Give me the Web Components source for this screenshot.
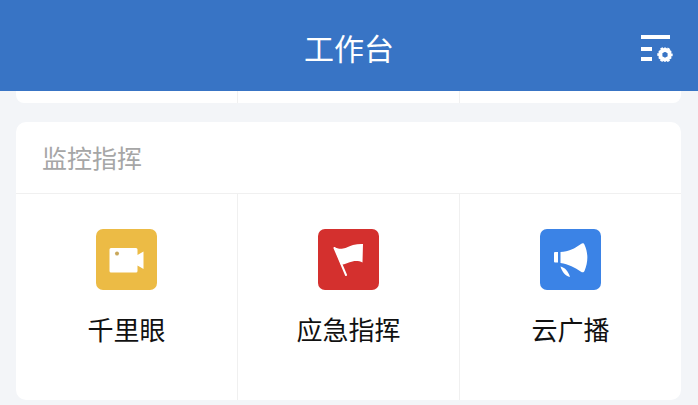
<!DOCTYPE html>
<html lang="zh">
<head>
<meta charset="utf-8">
<title>工作台</title>
<style>
  html, body { margin: 0; height: 405px; overflow: hidden; background: #f3f5f8; }
  body { font-family: "Noto Sans CJK SC", "Liberation Sans", sans-serif; }
</style>
</head>
<body>
<app-header title-text="工作台"></app-header>
<app-page>
  <stub-card></stub-card>
  <grid-card heading="监控指挥">
    <grid-cell label="千里眼" color="#ecbb45" icon="camera"></grid-cell>
    <grid-cell label="应急指挥" color="#d4302e" icon="flag"></grid-cell>
    <grid-cell label="云广播" color="#3b83e6" icon="horn"></grid-cell>
  </grid-card>
</app-page>

<script>
const icons = {
  camera: `<path fill="#fff" d="M15 19h25a1.500 1.500 0 0 1 1.500 1.500V26l6-3.500V40l-6-3.500V42a1.500 1.500 0 0 1-1.500 1.500H15a1.500 1.500 0 0 1-1.500-1.500V20.500A1.500 1.500 0 0 1 15 19z"/><circle cx="21" cy="24.500" r="2" fill="#c9a75a"/>`,
  flag: `<path fill="#fff" d="M16 18c3 1.500 6 2.200 9 1.600 3.500-.7 6-2.600 10-3.600 3.500-.9 7-1.200 10-1l-.5 18.500c-3-1.400-6.500-1.800-10-1-4 .9-7 2.800-11.500 3.300z"/><path fill="none" stroke="#fff" stroke-width="2" stroke-linecap="round" d="M16.500 19l11.500 27"/>`,
  horn: `<path fill="#fff" d="M15 23h3v10.500h-3a1 1 0 0 1-1-1V24a1 1 0 0 1 1-1zM20.500 23c8-.5 14.500-3.500 20.500-8 1.500-1.100 2.800-.8 3.500.7C48.300 24 48.300 33 44.500 42c-.7 1.500-2 1.700-3.500.7-6-4-12.500-7.700-20.500-8.700z"/><path fill="#fff" d="M20.500 37.500c4 .8 7.700 4.500 9.500 10.500-4.500-1-8-5-9.500-10.500z"/>`
};

class AppHeader extends HTMLElement {
  constructor() {
    super();
    this.attachShadow({ mode: 'open' });
    this.shadowRoot.innerHTML = `
      <style>
        :host { display: flex; align-items: center; justify-content: center; position: relative; height: 91px; background: #3874c5; color: #fff; }
        .title { font-size: 30px; line-height: 1; margin-top: 3px; }
        svg { position: absolute; left: 640px; top: 33px; }
      </style>
      <div class="title">${this.getAttribute('title-text')}</div>
      <svg width="34" height="32" viewBox="0 0 34 32">
        <path fill="#fff" d="M1 2h29v4H1zM1 14h11v4H1zM1 24h11v4H1z"/>
        <path fill="none" stroke="#fff" stroke-width="3.800" d="M25 16.500l4.500 2.600v5.200l-4.500 2.600-4.500-2.600v-5.200z"/>
        <circle cx="25" cy="21.700" r="6.800" fill="none" stroke="#fff" stroke-width="1.800" stroke-dasharray="2.800 4.320" stroke-dashoffset="1.400"/>
      </svg>
    `;
  }
}

class AppPage extends HTMLElement {
  constructor() {
    super();
    this.attachShadow({ mode: 'open' });
    this.shadowRoot.innerHTML = `
      <style>
        :host { display: flex; flex-direction: column; gap: 19px; padding: 0 17px 0 16px; }
      </style>
      <slot></slot>
    `;
  }
}

class StubCard extends HTMLElement {
  constructor() {
    super();
    this.attachShadow({ mode: 'open' });
    this.shadowRoot.innerHTML = `
      <style>
        :host { display: grid; grid-template-columns: 221px 222px 1fr; height: 12px; background: #fff; border-radius: 0 0 8px 8px; }
        div + div { border-left: 1px solid #f1f1f1; }
      </style>
      <div></div><div></div><div></div>
    `;
  }
}

class GridCard extends HTMLElement {
  constructor() {
    super();
    this.attachShadow({ mode: 'open' });
    this.shadowRoot.innerHTML = `
      <style>
        :host { display: block; background: #fff; border-radius: 10px; overflow: hidden; }
        .head { height: 72px; box-sizing: border-box; display: flex; align-items: center; padding-left: 26px; padding-bottom: 1px; border-bottom: 1px solid #f0f0f0; font-size: 25px; color: #a6a6a6; }
        .grid { display: grid; grid-template-columns: 221px 222px 1fr; height: 206px; }
      </style>
      <div class="head">${this.getAttribute('heading')}</div>
      <div class="grid"><slot></slot></div>
    `;
  }
}

class GridCell extends HTMLElement {
  constructor() {
    super();
    this.attachShadow({ mode: 'open' });
    const color = this.getAttribute('color');
    this.shadowRoot.innerHTML = `
      <style>
        :host { display: flex; flex-direction: column; align-items: center; padding-top: 35px; }
        :host(:not(:first-child)) { border-left: 1px solid #f0f0f0; }
        .icon { width: 61px; height: 61px; border-radius: 7px; background: ${color}; }
        svg { display: block; }
        .label { margin-top: 21px; font-size: 26px; line-height: 36px; color: #111; }
      </style>
      <div class="icon"><svg width="61" height="61" viewBox="0 0 61 61">${icons[this.getAttribute('icon')]}</svg></div>
      <div class="label">${this.getAttribute('label')}</div>
    `;
  }
}

customElements.define('app-header', AppHeader);
customElements.define('app-page', AppPage);
customElements.define('stub-card', StubCard);
customElements.define('grid-card', GridCard);
customElements.define('grid-cell', GridCell);
</script>
</body>
</html>
